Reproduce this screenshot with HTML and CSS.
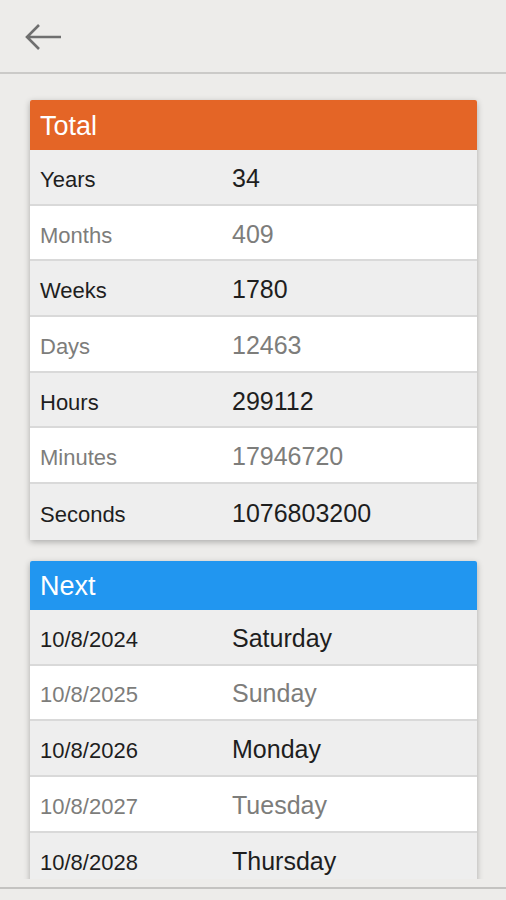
FILE: index.html
```html
<!DOCTYPE html>
<html lang="en">
<head>
    <meta charset="UTF-8">
    <title>Age Calculator</title>
    <link rel="stylesheet" href="styles.css">
</head>
<body>
<div class="topbar">
    <a href="#" class="back">
        <svg width="40" height="30" viewBox="0 0 40 30">
            <path d="M38 15H4M16 3L4 15l12 12" fill="none" stroke="#6f6f6f" stroke-width="2.6"/>
        </svg>
    </a>
</div>

<div class="scroller">
    <div class="card">
        <div class="card-title total">Total</div>
        <div class="row"><span class="key">Years</span><span class="val">34</span></div>
        <div class="row"><span class="key">Months</span><span class="val">409</span></div>
        <div class="row"><span class="key">Weeks</span><span class="val">1780</span></div>
        <div class="row"><span class="key">Days</span><span class="val">12463</span></div>
        <div class="row"><span class="key">Hours</span><span class="val">299112</span></div>
        <div class="row"><span class="key">Minutes</span><span class="val">17946720</span></div>
        <div class="row"><span class="key">Seconds</span><span class="val">1076803200</span></div>
    </div>

    <div class="card">
        <div class="card-title next">Next</div>
        <div class="row"><span class="key">10/8/2024</span><span class="val">Saturday</span></div>
        <div class="row"><span class="key">10/8/2025</span><span class="val">Sunday</span></div>
        <div class="row"><span class="key">10/8/2026</span><span class="val">Monday</span></div>
        <div class="row"><span class="key">10/8/2027</span><span class="val">Tuesday</span></div>
        <div class="row"><span class="key">10/8/2028</span><span class="val">Thursday</span></div>
    </div>
</div>

<div class="bottombar"></div>
</body>
</html>
```

FILE: styles.css
```css
html, body {
    margin: 0;
    padding: 0;
    height: 900px;
    overflow: hidden;
}

body {
    background: #edecea;
    font-family: "Liberation Sans", Arial, sans-serif;
}

.topbar {
    height: 72px;
    border-bottom: 2px solid #cbcac8;
    display: flex;
    align-items: center;
    padding-left: 23px;
}

.back {
    display: block;
    height: 30px;
    margin-top: 2px;
}

.scroller {
    height: 805px;
    overflow: hidden;
    padding: 26px 29px 0 30px;
    box-sizing: border-box;
}

.card {
    background: #fff;
    box-shadow: 0 2px 6px rgba(0, 0, 0, 0.28);
    border-radius: 2px;
    margin-bottom: 21px;
}

.card-title {
    height: 50px;
    line-height: 52px;
    color: #fff;
    font-size: 27px;
    padding-left: 10px;
    border-radius: 2px 2px 0 0;
}

.card-title.total {
    background: #e46526;
}

.card-title.next {
    height: 49px;
    line-height: 50px;
    background: #2196f0;
}

.row {
    height: 55.7px;
    box-sizing: border-box;
    display: flex;
    align-items: center;
    padding-left: 10px;
    border-bottom: 2px solid #d9d9d9;
    background: #eeeeee;
    color: #1e1e1e;
}

.row:nth-child(odd) {
    background: #fff;
    color: #7d7d7b;
}

.row:last-child {
    border-bottom: none;
}

.key {
    width: 192px;
    font-size: 22px;
    padding-top: 6px;
}

.val {
    font-size: 25px;
    padding-top: 3px;
}

.bottombar {
    height: 10px;
    border-top: 2px solid #c4c3c1;
    margin-top: 8px;
}
```
